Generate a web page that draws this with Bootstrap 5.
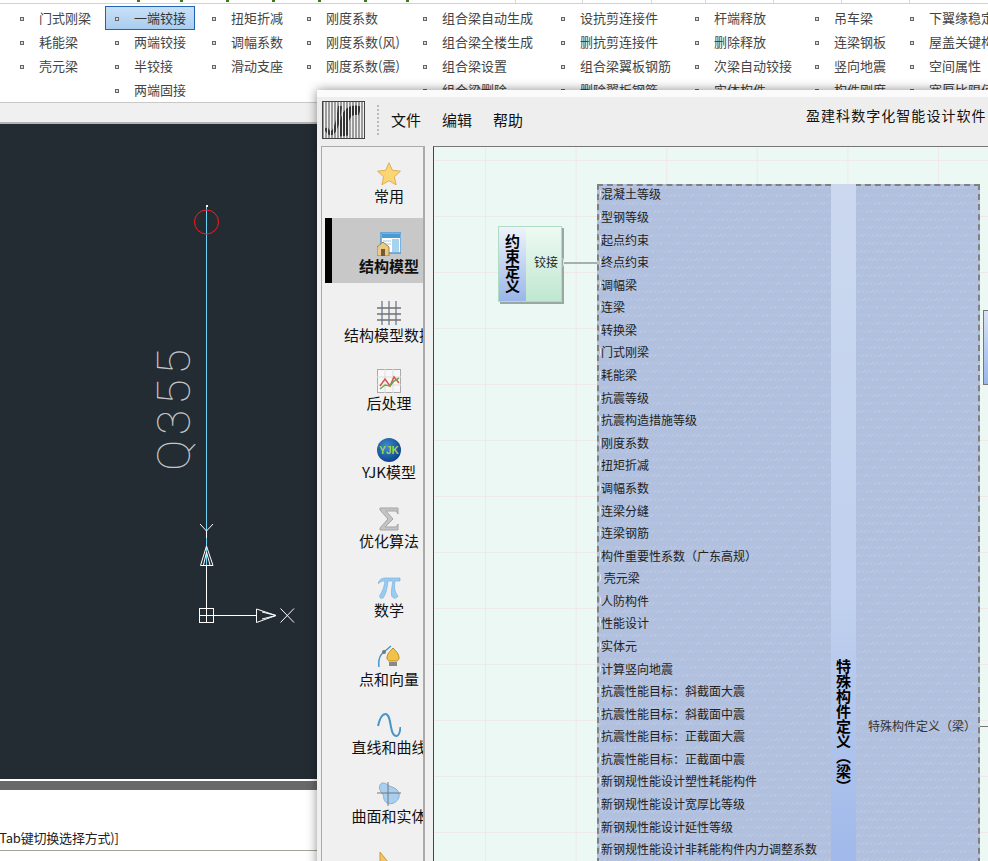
<!DOCTYPE html>
<html lang="zh">
<head>
<meta charset="utf-8">
<title>盈建科数字化智能设计软件</title>
<link href="https://cdn.jsdelivr.net/npm/bootstrap@5.3.0/dist/css/bootstrap.min.css" rel="stylesheet">
<style>
html,body{width:988px;height:861px;overflow:hidden;margin:0;background:#fff}
body,.app{font-family:"Noto Sans CJK SC","Liberation Sans",sans-serif;position:relative}
.app{width:988px;height:861px;overflow:hidden}
.ticks{height:4px;border-bottom:1px solid #d2d2d2;position:relative}
.ticks i{position:absolute;top:0;width:3px;height:2px;background:#3d7a1e}
.ticks b{position:absolute;top:0;width:1px;height:3px;background:#d8d8d8}
.ribbon{height:98px;overflow:hidden;background:#fff;padding-top:2px;color:#444;font-size:13px;line-height:21px}
.rcol{flex:none}
.ritem{height:24px;padding-left:28px;position:relative;white-space:nowrap;border:1px solid transparent;margin-left:-1px}
.ritem::before{content:"";position:absolute;left:9px;top:10px;width:4px;height:4px;border:1px solid #666;background:#ddd}
.ritem.sel{background:linear-gradient(#c9e0f6,#a9cdf0);border-color:#1f64b4;width:90px;color:#333}
.strip{height:20px;background:#f0f0f0;border-top:1px solid #c8c8c8}
.cad{height:657px;background:#232b33;border-top:2px solid #b4b4b4;position:relative}
.cad svg{display:block}
.divider{height:11px;background:#696969;border-top:2px solid #fff}
.cmd{height:61px;position:relative;border-bottom:1px solid #a4a49c;font-size:13px;letter-spacing:-.2px;color:#222;line-height:18px;padding-top:39px;white-space:nowrap;width:317px;text-indent:-5px;overflow:hidden}
.win{position:absolute;left:317px;top:90px;width:700px;height:800px;background:#f0f0f0;box-shadow:0 0 10px rgba(0,0,0,.45)}
.wtop{height:7px;background:#fbfbfb}
.whead{height:49px;background:#eee;position:relative;align-items:center}
.logo{width:43px;height:38px;margin:-3px 0 0 5px;border:1px solid #444;background:#d9d9d9;flex:none}
.logo svg{display:block}
.sep{width:0;height:30px;border-left:2px dotted #bbb;margin:-3px 12px 0 12px}
.menu{font-size:15px;color:#111;margin-right:21px;margin-top:-3px;line-height:20px}
.wtitle{position:absolute;left:489px;top:8px;font-size:14px;letter-spacing:1.05px;color:#111;white-space:nowrap;line-height:20px}
.wbody{height:744px}
.side{width:104px;margin-left:4px;flex:none;border:1px solid #aaa;border-right:2px solid #aaa;background:#f0f0f0;padding:3px 0 0 3px;overflow:hidden;height:720px}
.sitem{width:98px;height:68.8px;overflow:hidden;padding-top:12px;color:#111}
.sitem svg{display:block;margin-left:52px;width:24px;height:24px}
.slabel{width:128px;text-align:center;font-size:15px;line-height:18px;white-space:nowrap;margin-top:1px}
.sitem.act{background:#c8c8c8;box-shadow:inset 7px 0 0 #000;height:65px;margin-top:-.8px;margin-bottom:5.6px;padding-top:14px}
.sitem.act .slabel{font-weight:700}
.canvas{position:relative;flex:none;margin-left:8px;width:600px;height:720px;border-left:1px solid #444;border-top:1px solid #777;background-color:#ecf8f3;background-image:linear-gradient(90deg,#f0e9e9 1px,transparent 1px),linear-gradient(#f0e9e9 1px,transparent 1px);background-size:90.6px 56px;background-position:51px 13px;overflow:hidden}
.comp{position:absolute;box-shadow:2px 2px 0 rgba(110,125,120,.65)}
.c1{left:64px;top:79px;width:64px;height:76px;border:1px solid #aedcc4;background:linear-gradient(180deg,#eefaf3,#bfe7d1)}
.c1 .nm{position:absolute;left:0;top:0;bottom:0;width:27px;background:linear-gradient(#eef3fb,#9ab6e8);writing-mode:vertical-rl;text-orientation:upright;font-weight:700;font-size:15px;line-height:27px;text-align:center;color:#000}
.c1 .out{position:absolute;left:35px;top:25px;font-size:12px;line-height:20px;color:#222}
.grip{position:absolute;width:3px;height:9px;border-right:1px solid #dfe6f0;border-radius:0 4px 4px 0}
.wire{position:absolute;left:129px;top:115px;width:35px;height:2px;background:#a3b2aa}
.c2{left:163px;top:37px;width:383px;height:700px;border:2px dashed #808080;box-shadow:none;background-color:#b0c0de;background-image:repeating-linear-gradient(0deg,#b0c0de 0 5px,transparent 5px 8px),repeating-linear-gradient(135deg,rgba(255,255,255,.13) 0 1px,transparent 1px 3px)}
.band{position:absolute;left:232px;top:-2px;bottom:-2px;width:25px;background:linear-gradient(#cbd8ef,#c0d0ee 60%,#9db7ea 100%)}
.inlist{position:absolute;left:2px;top:-2.6px;font-size:12px;color:#222;white-space:nowrap}
.inlist div{height:22.58px;line-height:21px;position:relative}
.inlist div::before{content:"";position:absolute;left:-3px;top:6px;width:3px;height:9px;border-right:1px solid #dfe6f0;border-radius:0 4px 4px 0}
.vt{position:absolute;left:232px;top:473px;width:25px;writing-mode:vertical-rl;font-weight:700;font-size:15px;line-height:25px;color:#000;white-space:nowrap}
.outl{position:absolute;left:269px;top:530px;font-size:12px;line-height:20px;color:#333;white-space:nowrap}
.c3{left:549px;top:163px;width:12px;height:75px;border:1px solid #777;background:linear-gradient(#d8e2f4,#9ab6e8);box-shadow:none}
.w3{position:absolute;left:546px;top:579px;width:8px;height:1px;background:#777}
</style>
</head>
<body>
<div class="app">
  <div class="ticks">
    <i style="left:137px"></i><i style="left:180px"></i><i style="left:226px"></i><i style="left:272px"></i><i style="left:318px"></i><i style="left:364px"></i><i style="left:406px"></i>
    <b style="left:515px"></b><b style="left:582px"></b><b style="left:651px"></b><b style="left:705px"></b><b style="left:773px"></b><b style="left:841px"></b><b style="left:909px"></b>
  </div>
  <div class="ribbon d-flex">
    <div class="rcol" style="width:95px;margin-left:11px"><div class="ritem">门式刚梁</div><div class="ritem">耗能梁</div><div class="ritem">壳元梁</div></div>
    <div class="rcol" style="width:97px"><div class="ritem sel">一端铰接</div><div class="ritem">两端铰接</div><div class="ritem">半铰接</div><div class="ritem">两端固接</div></div>
    <div class="rcol" style="width:95px"><div class="ritem">扭矩折减</div><div class="ritem">调幅系数</div><div class="ritem">滑动支座</div></div>
    <div class="rcol" style="width:116px"><div class="ritem">刚度系数</div><div class="ritem">刚度系数(风)</div><div class="ritem">刚度系数(震)</div></div>
    <div class="rcol" style="width:138px"><div class="ritem">组合梁自动生成</div><div class="ritem">组合梁全楼生成</div><div class="ritem">组合梁设置</div><div class="ritem">组合梁删除</div></div>
    <div class="rcol" style="width:134px"><div class="ritem">设抗剪连接件</div><div class="ritem">删抗剪连接件</div><div class="ritem">组合梁翼板钢筋</div><div class="ritem">删除翼板钢筋</div></div>
    <div class="rcol" style="width:120px"><div class="ritem">杆端释放</div><div class="ritem">删除释放</div><div class="ritem">次梁自动铰接</div><div class="ritem">实体构件</div></div>
    <div class="rcol" style="width:95px"><div class="ritem">吊车梁</div><div class="ritem">连梁钢板</div><div class="ritem">竖向地震</div><div class="ritem">构件刚度</div></div>
    <div class="rcol" style="width:120px"><div class="ritem">下翼缘稳定</div><div class="ritem">屋盖关键构件</div><div class="ritem">空间属性</div><div class="ritem">宽厚比限值</div></div>
  </div>
  <div class="strip"></div>
  <div class="cad">
    <svg width="317" height="655" viewBox="0 124 317 655" aria-label="CAD 视图">
      <g fill="none" shape-rendering="crispEdges">
        <line x1="206.5" y1="206" x2="206.5" y2="566" stroke="#6fd3f5"/>
        <rect x="206" y="205" width="2" height="2" fill="#fff"/>
        <line x1="206.5" y1="531" x2="206.5" y2="538" stroke="#fff"/>
        <line x1="206.5" y1="566" x2="206.5" y2="615" stroke="#fff"/>
        <line x1="206.5" y1="615.5" x2="257" y2="615.5" stroke="#fff"/>
        <rect x="199.5" y="608.5" width="14" height="14" stroke="#fff"/>
        <line x1="206.5" y1="608" x2="206.5" y2="623" stroke="#fff"/>
        <line x1="199" y1="615.5" x2="214" y2="615.5" stroke="#fff"/>
      </g>
      <circle cx="206.5" cy="222" r="12" fill="none" stroke="#ff1a1a" stroke-width="1"/>
      <path d="M200 524L206.5 531L213 524" fill="none" stroke="#fff"/>
      <path d="M206.5 546L200.5 565.5H213L206.5 546ZM206.5 552L203.5 565M206.5 552L210 565" fill="none" stroke="#fff"/>
      <path d="M256.5 609V622.5L276 615.5ZM262 612L276 615.5M262 619L276 615.5" fill="none" stroke="#fff"/>
      <path d="M280.500 608.500L294 622.500M294 608.500L280.500 622.500" fill="none" stroke="#fff"/>
      <text transform="translate(190 471) rotate(-90)" font-family="Roboto, sans-serif" font-weight="100" font-size="47" letter-spacing="4.500" fill="#c4c6c8">Q355</text>
    </svg>
  </div>
  <div class="divider"></div>
  <div class="cmd">[Tab键切换选择方式)]</div>

  <div class="win">
    <div class="wtop"></div>
    <div class="whead d-flex">
      <div class="logo"><svg width="41" height="36" viewBox="0 0 41 36"><defs><pattern id="st" width="3" height="3" patternUnits="userSpaceOnUse"><rect x="1" width="1" height="3" fill="#f2f2f2"/></pattern></defs><rect width="41" height="36" fill="#9c9c9c"/><path d="M3 26C7 36 14 33 17 4" fill="none" stroke="#3a3a3a" stroke-width="4"/><path d="M21 34C19 16 25 5 37 9" fill="none" stroke="#333" stroke-width="9"/><rect width="41" height="36" fill="url(#st)"/></svg></div>
      <div class="sep"></div>
      <div class="menu">文件</div><div class="menu">编辑</div><div class="menu">帮助</div>
      <div class="wtitle">盈建科数字化智能设计软件</div>
    </div>
    <div class="wbody d-flex">
      <div class="side">
        <div class="sitem"><svg viewBox="0 0 24 24"><path d="M12 .8l3.4 7.5 8 .9-6 5.500 1.700 8.100L12 18.700 4.900 22.800l1.700-8.100-6-5.500 8-.9z" fill="#fcd675" stroke="#dcae55"/></svg><div class="slabel">常用</div></div>
        <div class="sitem act"><svg viewBox="0 0 24 24"><rect x="4" y="1" width="20" height="20" fill="#fff" stroke="#4a9ad6" stroke-width="1.500"/><rect x="5" y="2" width="18" height="4" fill="#4a9ad6"/><rect x="15" y="7" width="7" height="13" fill="#a8d3ee"/><path d="M6 9h8M6 12h8" stroke="#9ccbe8"/><path d="M0 24V15l6-5 6 5v9z" fill="#e8c98c" stroke="#a97d3c"/><rect x="4" y="17" width="4" height="7" fill="#7a5a2a"/></svg><div class="slabel">结构模型</div></div>
        <div class="sitem"><svg viewBox="0 0 24 24"><g stroke="#7b8aa0" stroke-width="1.500"><path d="M5 0v24M12 0v24M19 0v24"/></g><g stroke="#74716e" stroke-width="1.500"><path d="M0 7h24M0 13h24M0 19h24"/></g></svg><div class="slabel">结构模型数据</div></div>
        <div class="sitem"><svg viewBox="0 0 24 24"><rect x=".5" y=".5" width="23" height="23" fill="#f7f7f7" stroke="#aaa"/><path d="M8 0v24M16 0v24M0 8h24M0 16h24" stroke="#ddd"/><path d="M3 17l5-7 5 7 4-9 5 6" fill="none" stroke="#d9534f" stroke-width="1.500"/><path d="M3 20l5-4 5 1 4-5 5-3" fill="none" stroke="#6aa84f" stroke-width="1.500"/></svg><div class="slabel">后处理</div></div>
        <div class="sitem"><svg viewBox="0 0 24 24"><defs><radialGradient id="yg" cx=".4" cy=".35" r=".7"><stop offset="0" stop-color="#3d8fd0"/><stop offset="1" stop-color="#0b3f86"/></radialGradient></defs><circle cx="12" cy="12" r="12" fill="url(#yg)"/><text x="12" y="15.500" text-anchor="middle" font-family="Liberation Sans, sans-serif" font-size="10" font-weight="700" fill="#a4d24e">YJK</text></svg><div class="slabel">YJK模型</div></div>
        <div class="sitem"><svg viewBox="0 0 24 24"><path d="M3 1h18v6l-2-3H9l7 8-8 8h11l2-3v6H3v-2l8-9-8-9z" fill="#c4c4c4" stroke="#a4a4a4"/></svg><div class="slabel">优化算法</div></div>
        <div class="sitem"><svg viewBox="0 0 24 24"><path d="M1 7C3 3 5 2 9 2h14v3h-5c-1 6-.5 11 3 15-1 3-6 3-6.500-1-.5-4 .5-9 1.500-14h-5C10 13 9 18 6 22c-3 1-4-1-3-3 2-3 4-7 5-14-3 0-5 .5-6 2.500z" fill="#9accf2" stroke="#6ea9d8" stroke-width=".6"/></svg><div class="slabel">数学</div></div>
        <div class="sitem"><svg viewBox="0 0 24 24"><path d="M2 22C1 14 4 9 7 7L14 1" fill="none" stroke="#4a94c6" stroke-width="1.500"/><circle cx="7" cy="7" r="2" fill="#777"/><path d="M16 3c3 3 6 6 6 10 0 2-2 3-2 3h-8s-2-1-2-3c0-4 3-7 6-10z" fill="#f1c24a" stroke="#b58a22"/><rect x="12" y="17" width="8" height="4" fill="#888"/></svg><div class="slabel">点和向量</div></div>
        <div class="sitem"><svg viewBox="0 0 24 24"><path d="M1 13C3 4 6 1 8.500 1 12 1 13 8 14 14s3 9 5.500 9c2 0 3.500-4 4-9" fill="none" stroke="#4a94c6" stroke-width="2"/></svg><div class="slabel">直线和曲线</div></div>
        <div class="sitem"><svg viewBox="0 0 24 24"><path d="M6 1c4 0 5 3 9 4 6 2 8 6 7 10-2 6-8 8-12 6-5-3-2-7-5-10C1 7 2 1 6 1z" fill="#a8cff0" stroke="#8fb0c8"/><path d="M11 0v24M0 11h24" stroke="#777"/></svg><div class="slabel">曲面和实体</div></div>
        <div class="sitem"><svg viewBox="0 0 24 24"><path d="M3 1L20 22H3z" fill="#f3c463" stroke="#cf9a3c"/></svg><div class="slabel">变换</div></div>
      </div>
      <div class="canvas">
        <div class="wire"></div>
        <div class="comp c1"><div class="nm">约束定义</div><div class="out">铰接</div><div class="grip" style="left:62px;top:31px"></div></div>
        <div class="comp c2">
          <div class="inlist">
            <div>混凝土等级</div><div>型钢等级</div><div>起点约束</div><div>终点约束</div><div>调幅梁</div><div>连梁</div><div>转换梁</div><div>门式刚梁</div><div>耗能梁</div><div>抗震等级</div><div>抗震构造措施等级</div><div>刚度系数</div><div>扭矩折减</div><div>调幅系数</div><div>连梁分缝</div><div>连梁钢筋</div><div>构件重要性系数（广东高规）</div><div>&nbsp;壳元梁</div><div>人防构件</div><div>性能设计</div><div>实体元</div><div>计算竖向地震</div><div>抗震性能目标：斜截面大震</div><div>抗震性能目标：斜截面中震</div><div>抗震性能目标：正截面大震</div><div>抗震性能目标：正截面中震</div><div>新钢规性能设计塑性耗能构件</div><div>新钢规性能设计宽厚比等级</div><div>新钢规性能设计延性等级</div><div>新钢规性能设计非耗能构件内力调整系数</div>
          </div>
          <div class="band"></div>
          <div class="vt">特殊构件定义（梁）</div>
          <div class="outl">特殊构件定义（梁）</div>
        </div>
        <div class="comp c3"></div>
        <div class="w3"></div>
      </div>
    </div>
  </div>
</div>
<script src="https://cdn.jsdelivr.net/npm/bootstrap@5.3.0/dist/js/bootstrap.bundle.min.js"></script>
</body>
</html>
